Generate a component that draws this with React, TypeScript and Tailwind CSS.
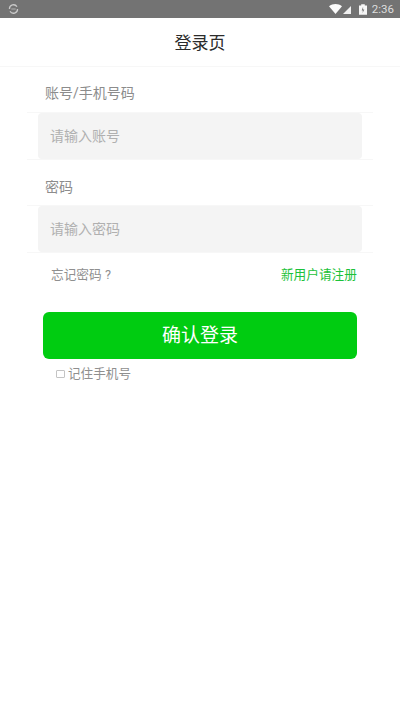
import React from 'react';

const cjk = "font-['Roboto','Noto_Sans_CJK_SC',sans-serif]";

function StatusBar() {
  return (
    <div className="h-[18px] bg-[#737373] flex items-center justify-between pl-[8px] pr-[6px] shrink-0">
      <svg width="11" height="12" viewBox="0 0 12 12" fill="none" stroke="#c9c9c9" strokeWidth="1.4">
        <path d="M1.6 6A4.4 4.4 0 0 1 9.8 3.6" />
        <path d="M10.4 6A4.4 4.4 0 0 1 2.2 8.4" />
        <path d="M3.6 6h4.8" strokeWidth="0.8" />
      </svg>
      <div className="flex items-center">
        <svg width="13" height="10" viewBox="0 0 13 10" fill="#fbfbfb">
          <path d="M0 2.2C3.6-.7 9.4-.7 13 2.2L6.5 10Z" />
        </svg>
        <svg width="8" height="8" viewBox="0 0 9 9" fill="#f0f0f0" className="ml-[1px] mt-[1px]">
          <path d="M9 0V9H0Z" />
        </svg>
        <svg width="8" height="11" viewBox="0 0 9 12" className="ml-[8px]">
          <path d="M0 1.5H2.5V0H6.5V1.5H9V12H0Z" fill="#f6f6f6" />
          <path d="M4.6 3 3 7H4.4L4 10 6 6H4.6Z" fill="#737373" />
        </svg>
        <span className="ml-[5px] text-[11.5px] leading-[18px] text-[#dedede] font-['Roboto',sans-serif]">2:36</span>
      </div>
    </div>
  );
}

function Field({ label, placeholder, labelClass }: { label: string; placeholder: string; labelClass: string }) {
  return (
    <div>
      <div className={`px-[45px] text-[14px] leading-[20px] text-[#8c8c8c] ${labelClass}`}>{label}</div>
      <div className="mx-[27px] border-y border-[#f7f7f7]">
        <div className="mx-[11px] h-[46px] bg-[#f4f4f4] rounded-[4px] pl-[12px] flex items-center text-[14px] text-[#b0b0b0]">
          {placeholder}
        </div>
      </div>
    </div>
  );
}

export default function App() {
  return (
    <div className={`w-[400px] h-[710px] bg-white flex flex-col ${cjk}`}>
      <StatusBar />
      <div className="h-[49px] pt-[3px] border-b border-[#f7f7f7] flex items-center justify-center text-[17px] text-[#2b2b2b] shrink-0">
        登录页
      </div>
      <Field label="账号/手机号码" placeholder="请输入账号" labelClass="pt-[16px] pb-[9px]" />
      <Field label="密码" placeholder="请输入密码" labelClass="pt-[17px] pb-[8px]" />
      <div className="flex items-center justify-between pl-[51px] pr-[43px] pt-[12px] text-[12.7px] leading-[20px]">
        <span className="text-[#8f8f8f]">忘记密码 ?</span>
        <span className="text-[#1cc23a]">新用户请注册</span>
      </div>
      <button className="mx-[43px] mt-[27px] h-[47px] pt-[1px] rounded-[6px] bg-[#00cc11] text-white text-[19px] flex items-center justify-center">
        确认登录
      </button>
      <div className="flex items-center pl-[56px] mt-[6px] text-[12.6px] leading-[18px] text-[#8f8f8f]">
        <span className="w-[9px] h-[8px] border border-[#c4c4c4] rounded-[1px] mr-[3px]" />
        记住手机号
      </div>
    </div>
  );
}
